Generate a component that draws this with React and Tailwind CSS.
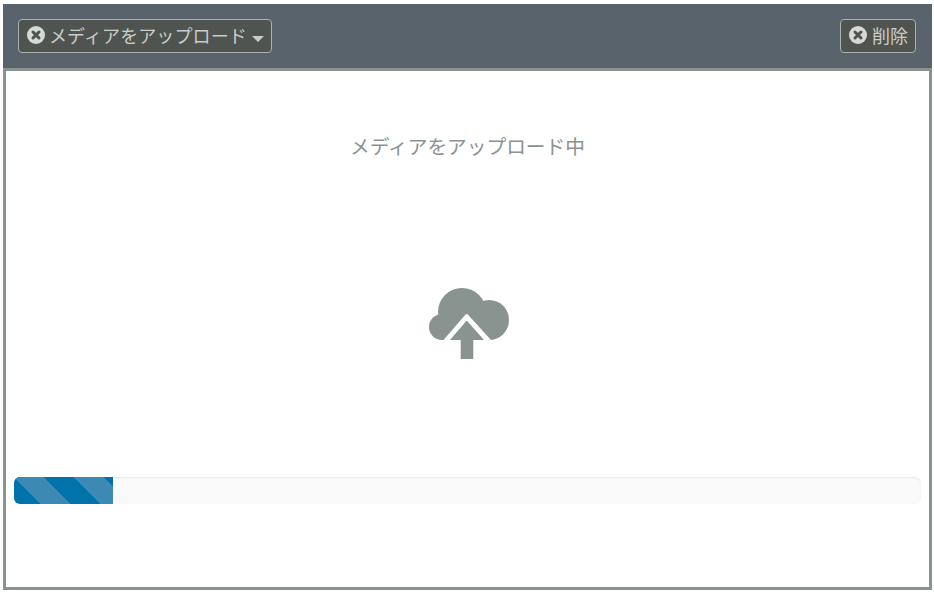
import React from "react";

const font = { fontFamily: '"Noto Sans CJK JP", sans-serif' };

const TimesCircle = ({ className = "" }) => (
  <svg viewBox="0 0 18 18" className={className}>
    <circle cx="9" cy="9" r="9" fill="#d6d9d6" />
    <path d="M6 6l6 6M12 6l-6 6" stroke="#4f5450" strokeWidth="3" strokeLinecap="round" />
  </svg>
);

const CloudUpload = () => (
  <svg viewBox="0 0 80 72" className="w-[80px] h-[72px] ml-[2px]">
    <g fill="#89938f">
      <circle cx="33" cy="24" r="24" />
      <circle cx="60" cy="32" r="20" />
      <circle cx="13" cy="39" r="13" />
      <rect x="13" y="30" width="47" height="22" />
    </g>
    <path d="M16.500 52L37.700 27.500L60 52Z" fill="#fff" stroke="#fff" strokeWidth="3" strokeLinejoin="round" />
    <rect x="0" y="52" width="80" height="20" fill="#fff" />
    <path d="M37.700 32.500L21 52H31.700V71H44.300V52H55Z" fill="#89938f" />
  </svg>
);

export default function App() {
  return (
    <div className="w-[934px] h-[595px] bg-white pt-[4px] pl-[3px]" style={font}>
      <div className="w-[929px] h-[586px] flex flex-col">
        <div className="h-[64px] shrink-0 bg-[#59636b] flex items-center justify-between pl-[15px] pr-[16px]">
          <button className="h-[34px] flex items-center pl-[8px] pr-[7px] pb-[2px] gap-[4px] rounded-[4px] border border-[#a9b2ac] bg-[#4f5450] text-[#c9cdc9] text-[18px] leading-none">
            <TimesCircle className="w-[18px] h-[18px]" />
            <span className="pb-[1px] tracking-[0.1px]">メディアをアップロード</span>
            <span className="w-0 h-0 mt-[7px] ml-[1px] border-x-[6px] border-x-transparent border-t-[6px] border-t-[#c9cdc9]" />
          </button>
          <button className="h-[34px] flex items-center pl-[8px] pr-[7px] pb-[2px] gap-[5px] rounded-[4px] border border-[#a9b2ac] bg-[#4f5450] text-[#c9cdc9] text-[18px] leading-none">
            <TimesCircle className="w-[18px] h-[18px]" />
            <span className="pb-[1px]">削除</span>
          </button>
        </div>
        <div className="flex-1 border-[3px] border-[#89938f] bg-white flex flex-col">
          <div className="mt-[60px] h-[30px] leading-[30px] text-center text-[19.7px] text-[#89938f]">
            メディアをアップロード中
          </div>
          <div className="mt-[127px] flex justify-center">
            <CloudUpload />
          </div>
          <div className="mt-[117px] mx-[8px] h-[27px] rounded-[6px] bg-[#f9f9f9] shadow-[inset_0_1px_2px_rgba(0,0,0,0.07)] overflow-hidden">
            <div className="w-[99px] h-full bg-[#0073aa] bg-[linear-gradient(45deg,#3c8ab4_25%,transparent_25%,transparent_50%,#3c8ab4_50%,#3c8ab4_75%,transparent_75%,transparent)] bg-[length:60px_60px]" />
          </div>
        </div>
      </div>
    </div>
  );
}
